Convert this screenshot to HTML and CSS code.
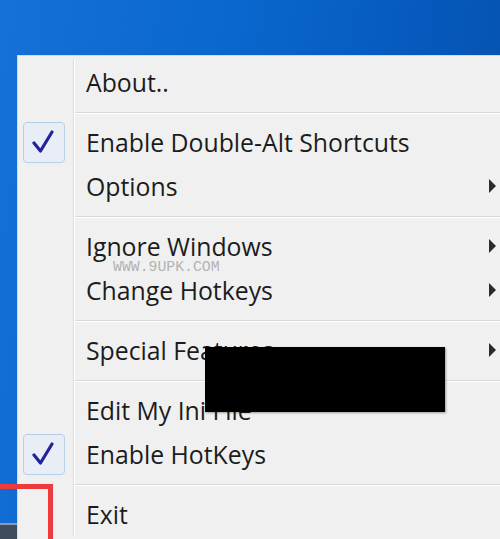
FILE: index.html
```html
<!DOCTYPE html>
<html>
<head>
<meta charset="utf-8">
<link rel="stylesheet" href="styles.css">
</head>
<body>
<div class="desktop">
  <div class="menu">
    <div class="row"><div class="gutter"></div><div class="cell"><span class="label">About..</span></div></div>
    <div class="sep"><div class="gutter"></div><div class="cell"><div class="line"></div></div></div>
    <div class="row"><div class="gutter"><div class="check"><svg width="24" height="26" viewBox="0 0 24 26"><path d="M2 14 L8.5 22 L20 3" fill="none" stroke="#23239a" stroke-width="3.2" stroke-linecap="round" stroke-linejoin="round"/></svg></div></div><div class="cell"><span class="label">Enable Double-Alt Shortcuts</span></div></div>
    <div class="row"><div class="gutter"></div><div class="cell"><span class="label">Options</span><span class="arrow"></span></div></div>
    <div class="sep"><div class="gutter"></div><div class="cell"><div class="line"></div></div></div>
    <div class="row"><div class="gutter"></div><div class="cell"><span class="label">Ignore Windows</span><span class="arrow"></span></div></div>
    <div class="row"><div class="gutter"></div><div class="cell"><span class="label">Change Hotkeys</span><span class="arrow"></span></div></div>
    <div class="sep"><div class="gutter"></div><div class="cell"><div class="line"></div></div></div>
    <div class="row"><div class="gutter"></div><div class="cell"><span class="label">Special Features</span><span class="arrow"></span></div></div>
    <div class="sep"><div class="gutter"></div><div class="cell"><div class="line"></div></div></div>
    <div class="row"><div class="gutter"></div><div class="cell"><span class="label">Edit My Ini File</span></div></div>
    <div class="row"><div class="gutter"><div class="check"><svg width="24" height="26" viewBox="0 0 24 26"><path d="M2 14 L8.5 22 L20 3" fill="none" stroke="#23239a" stroke-width="3.2" stroke-linecap="round" stroke-linejoin="round"/></svg></div></div><div class="cell"><span class="label">Enable HotKeys</span></div></div>
    <div class="sep"><div class="gutter"></div><div class="cell"><div class="line"></div></div></div>
    <div class="row"><div class="gutter"></div><div class="cell"><span class="label">Exit</span></div></div>
  </div>
  <div class="watermark">WWW.9UPK.COM</div>
  <div class="redact"></div>
  <div class="highlight"></div>
</div>
</body>
</html>
```
FILE: styles.css
```css
html, body {
  margin: 0;
  padding: 0;
}
body {
  width: 500px;
  height: 539px;
  overflow: hidden;
  background:
    linear-gradient(to bottom, transparent 523px, #8a9ab0 523px, #8a9ab0 525px, #3e4c5e 525px),
    linear-gradient(100deg, #1570d8 0%, #0a67cd 40%, #065abe 70%, #054fa8 100%);
}
.desktop {
  position: relative;
  width: 500px;
  height: 539px;
  padding: 55px 0 0 17px;
  box-sizing: border-box;
  overflow: hidden;
}
.menu {
  width: 482px;
  background: #f0f0f0;
  border: 1px solid #d6d9dd;
  border-right: none;
  border-bottom: none;
  padding-top: 4px;
  padding-bottom: 3px;
  font-family: "Open Sans", "Noto Sans", sans-serif;
  font-size: 24.8px;
  color: #1c1c1c;
}
.row, .sep {
  display: flex;
}
.row { height: 44px; }
.sep { height: 16px; }
.gutter {
  width: 55px;
  flex: none;
  border-right: 1px solid #dcdcdc;
  display: flex;
  align-items: center;
}
.cell {
  flex: 1;
  border-left: 1px solid #ffffff;
  display: flex;
  align-items: center;
  padding-left: 11px;
  padding-right: 4px;
}
.sep .cell {
  padding: 0;
  align-items: flex-start;
}
.line {
  margin-top: 8px;
  width: 100%;
  height: 1px;
  background: #d8d8d8;
  border-bottom: 1px solid #ffffff;
}
.label {
  white-space: nowrap;
  line-height: 1;
}
.arrow {
  margin-left: auto;
  width: 0;
  height: 0;
  border-left: 7px solid #2a2a2a;
  border-top: 7px solid transparent;
  border-bottom: 7px solid transparent;
}
.check {
  margin-left: 5px;
  width: 40px;
  height: 39px;
  border: 1px solid #b8cfe8;
  border-radius: 4px;
  background: #e9eef6;
  display: flex;
  align-items: center;
  justify-content: center;
}
.watermark {
  position: absolute;
  left: 113px;
  top: 262px;
  font-family: "Liberation Mono", monospace;
  font-size: 14.8px;
  line-height: 11px;
  color: #b3b3b3;
}
.redact {
  position: absolute;
  left: 205px;
  top: 347px;
  width: 240px;
  height: 65px;
  background: #000;
  box-shadow: 1px 1px 2px rgba(0,0,0,0.35);
}
.highlight {
  position: absolute;
  left: 0;
  top: 484px;
  width: 48px;
  height: 50px;
  border-top: 5px solid #ee3a3a;
  border-right: 5px solid #ee3a3a;
}
```
